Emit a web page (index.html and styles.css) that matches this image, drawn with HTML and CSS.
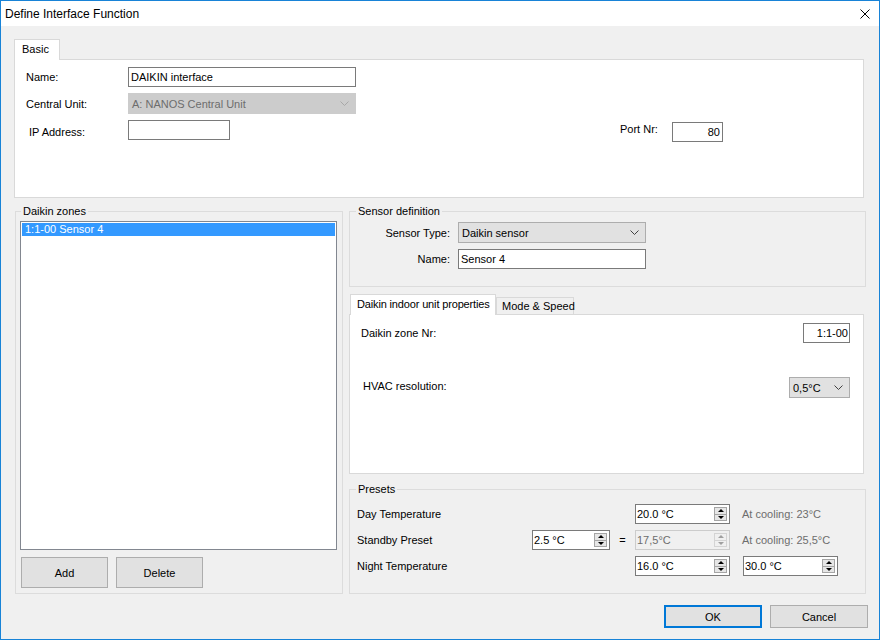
FILE: index.html
```html
<!DOCTYPE html>
<html lang="en">
<head>
  <meta charset="UTF-8">
  <title>Define Interface Function</title>
  <link rel="stylesheet" href="styles.css">
</head>
<body>

<div class="window">
  <div class="titlebar">
    <span class="title">Define Interface Function</span>
    <svg class="close" width="10" height="10" viewBox="0 0 10 10">
      <path d="M0.5 0.5 L9.5 9.5 M9.5 0.5 L0.5 9.5" stroke="#000" stroke-width="1"/>
    </svg>
  </div>

  <div class="client">
    <!-- Basic tab -->
    <div class="tabstrip">
      <div class="tab active basic-tab">Basic</div>
    </div>
    <div class="tabpage basic-page">
      <div class="row">
        <span class="lbl">Name:</span>
        <div class="edit w228">DAIKIN interface</div>
      </div>
      <div class="row">
        <span class="lbl">Central Unit:</span>
        <div class="combo disabled w228">
          <span>A: NANOS Central Unit</span>
          <svg class="chev" width="9" height="5" viewBox="0 0 9 5"><path d="M0.5 0.5 L4.5 4.5 L8.5 0.5" fill="none" stroke="#a8a8a8"/></svg>
        </div>
      </div>
      <div class="row ip-row">
        <span class="lbl ip-lbl">IP Address:</span>
        <div class="edit w102"></div>
        <span class="port-lbl">Port Nr:</span>
        <div class="edit align-r port">80</div>
      </div>
    </div>

    <div class="lower">
      <!-- Daikin zones -->
      <fieldset class="group zones">
        <legend>Daikin zones</legend>
        <div class="listbox">
          <div class="item selected">1:1-00 Sensor 4</div>
        </div>
        <div class="btnrow">
          <button class="btn">Add</button>
          <button class="btn">Delete</button>
        </div>
      </fieldset>

      <div class="right-col">
        <!-- Sensor definition -->
        <fieldset class="group sensor">
          <legend>Sensor definition</legend>
          <div class="row">
            <span class="lbl">Sensor Type:</span>
            <div class="combo w188">
              <span>Daikin sensor</span>
              <svg class="chev" width="9" height="5" viewBox="0 0 9 5"><path d="M0.5 0.5 L4.5 4.5 L8.5 0.5" fill="none" stroke="#404040"/></svg>
            </div>
          </div>
          <div class="row">
            <span class="lbl">Name:</span>
            <div class="edit w188">Sensor 4</div>
          </div>
        </fieldset>

        <!-- indoor unit tabs -->
        <div class="tabstrip unit-tabs">
          <div class="tab active unit-tab">Daikin indoor unit properties</div>
          <div class="tab mode-tab">Mode &amp; Speed</div>
        </div>
        <div class="tabpage unit-page">
          <div class="row spread">
            <span>Daikin zone Nr:</span>
            <div class="edit align-r zone">1:1-00</div>
          </div>
          <div class="row spread hvac-row">
            <span class="hvac-lbl">HVAC resolution:</span>
            <div class="combo w61">
              <span>0,5°C</span>
              <svg class="chev" width="9" height="5" viewBox="0 0 9 5"><path d="M0.5 0.5 L4.5 4.5 L8.5 0.5" fill="none" stroke="#404040"/></svg>
            </div>
          </div>
        </div>

        <!-- Presets -->
        <fieldset class="group presets">
          <legend>Presets</legend>
          <div class="pgrid">
            <span>Day Temperature</span>
            <span></span>
            <span></span>
            <div class="spin w95">
              <span class="val">20.0 °C</span>
              <span class="spin-btns"><i class="up"></i><i class="down"></i></span>
            </div>
            <span class="note">At cooling: 23°C</span>

            <span>Standby Preset</span>
            <div class="spin w78">
              <span class="val">2.5 °C</span>
              <span class="spin-btns"><i class="up"></i><i class="down"></i></span>
            </div>
            <span class="eq">=</span>
            <div class="spin disabled w95">
              <span class="val">17,5°C</span>
              <span class="spin-btns"><i class="up"></i><i class="down"></i></span>
            </div>
            <span class="note">At cooling: 25,5°C</span>

            <span>Night Temperature</span>
            <span></span>
            <span></span>
            <div class="spin w95">
              <span class="val">16.0 °C</span>
              <span class="spin-btns"><i class="up"></i><i class="down"></i></span>
            </div>
            <div class="spin w95 second">
              <span class="val">30.0 °C</span>
              <span class="spin-btns"><i class="up"></i><i class="down"></i></span>
            </div>
          </div>
        </fieldset>
      </div>
    </div>

    <div class="footer">
      <button class="btn dlg default">OK</button>
      <button class="btn dlg">Cancel</button>
    </div>
  </div>
</div>

</body>
</html>
```

FILE: styles.css
```css
* { box-sizing:border-box; }
body { margin:0; font-family:"Liberation Sans", Arial, sans-serif; font-size:11px; color:#000; }

.window { width:880px; height:640px; border:1px solid #1883d7; background:#f0f0f0; overflow:hidden; }
.titlebar { height:25px; background:#fff; display:flex; align-items:center; justify-content:space-between; padding:0 9px 0 4px; }
.title { font-size:12px; }
.close { display:block; }

.client { padding:13px 11px 0 13px; }

/* tabs */
.tabstrip { display:flex; align-items:flex-end; height:20px; }
.tab { border:1px solid #d9d9d9; border-bottom:0; background:#f0f0f0; height:17px; line-height:16px; padding-left:5px; white-space:nowrap; }
.tab.active { background:#fff; height:21px; line-height:19px; margin-bottom:-1px; position:relative; }
.basic-tab { width:46px; padding-left:7px; }
.tabpage { background:#fff; border:1px solid #d9d9d9; }

/* basic page */
.basic-page { width:850px; height:139px; padding:7px 0 0 11px; }
.row { display:flex; align-items:center; }
.row + .row { margin-top:6px; }
.basic-page .lbl { width:102px; }
.basic-page .ip-lbl { width:99px; margin-left:3px; margin-top:6px; }
.ip-row { align-items:flex-start; }
.port-lbl { width:52px; margin-left:390px; margin-top:3px; }
.port { width:51px; margin-top:2px; }

/* controls */
.edit { height:20px; border:1px solid #7a7a7a; background:#fff; padding:0 2px; display:flex; align-items:center; white-space:nowrap; flex-shrink:0; }
.edit.align-r { justify-content:flex-end; }
.combo { height:21px; border:1px solid #adadad; background:#e1e1e1; padding:0 6px 0 3px; display:flex; align-items:center; justify-content:space-between; white-space:nowrap; flex-shrink:0; }
.combo.disabled { background:#cccccc; border-color:#cccccc; color:#6d6d6d; }
.chev { display:block; }
.w228 { width:228px; }
.w188 { width:188px; }
.w102 { width:102px; }
.w95 { width:95px; }
.w78 { width:78px; }
.w61 { width:61px; }

/* group boxes */
.lower { display:flex; margin-top:7px; }
.group { border:1px solid #dcdcdc; margin:0; padding:0; min-width:0; }
.group legend { line-height:13px; padding:0 2px; margin-left:6px; }

.zones { width:328px; margin-left:1px; padding:3px 5px 5px 4px; }
.group.zones legend { margin-left:1px; }
.listbox { height:329px; border:1px solid #828790; background:#fff; padding:1px; }
.item { height:13px; line-height:13px; padding-left:3px; white-space:nowrap; }
.item.selected { background:#3399ff; color:#fff; }
.btnrow { display:flex; gap:8px; margin-top:7px; margin-left:1px; }
.btn { width:87px; height:31px; padding:0; border:1px solid #adadad; background:#e1e1e1; font:inherit; color:#000; }

.right-col { width:517px; margin-left:6px; }
.sensor { padding:4px 0 17px; }
.sensor .lbl { width:100px; text-align:right; margin-right:8px; }

.unit-tabs { margin-top:7px; padding-left:1px; }
.unit-tab { width:146px; padding-left:6px; letter-spacing:-0.15px; }
.mode-tab { width:78px; }
.unit-page { width:515px; height:160px; padding:8px 13px 0 11px; }
.spread { justify-content:space-between; }
.edit.zone { width:47px; padding-right:1px; }
.row.hvac-row { margin-top:34px; }
.hvac-lbl { margin-left:2px; margin-bottom:4px; }

.presets { margin-top:9px; padding:8px 0 17px 7px; }
.group.presets legend { margin-left:-1px; }
.pgrid { display:grid; grid-template-columns:175px 78px 25px 95px auto; row-gap:6px; align-items:center; }
.note { color:#6d6d6d; margin-left:12px; white-space:nowrap; }
.eq { text-align:center; }
.second { margin-left:13px; }

.spin { display:flex; height:20px; border:1px solid #7a7a7a; background:#fff; }
.spin .val { flex:1; padding-left:1px; display:flex; align-items:center; white-space:nowrap; }
.spin-btns { display:flex; flex-direction:column; width:13px; margin:2px 2px 2px 0; border:1px solid #a5a5a5; background:#e6e6e6; }
.spin-btns i { flex:1; display:flex; align-items:center; justify-content:center; }
.spin-btns i + i { border-top:1px solid #a5a5a5; }
.spin-btns .up::before { content:""; border-left:3px solid transparent; border-right:3px solid transparent; border-bottom:3px solid #000; }
.spin-btns .down::before { content:""; border-left:3px solid transparent; border-right:3px solid transparent; border-top:3px solid #000; }
.spin.disabled { border-color:#cccccc; background:#f0f0f0; color:#6d6d6d; }
.spin.disabled .spin-btns { border-color:#d4d4d4; background:#f0f0f0; }
.spin.disabled .spin-btns i + i { border-top-color:#d4d4d4; }
.spin.disabled .up::before { border-bottom-color:#a0a0a0; }
.spin.disabled .down::before { border-top-color:#a0a0a0; }

.footer { display:flex; justify-content:flex-end; gap:8px; margin-top:11px; }
.btn.dlg { width:98px; height:23px; }
.btn.default { border:2px solid #0078d7; }
```
